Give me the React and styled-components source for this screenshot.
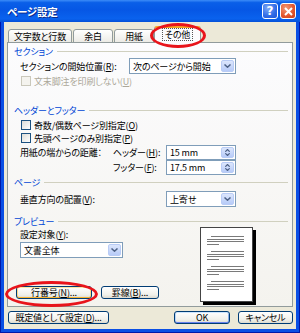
import React from 'react';
import styled, { createGlobalStyle, css } from 'styled-components';

const Global = createGlobalStyle`
  html, body { margin: 0; padding: 0; background: #ffffff; }
  body {
    font-family: "Noto Sans CJK JP", "Noto Sans", sans-serif;
    font-size: 9px;
    letter-spacing: -0.15px;
    font-feature-settings: "palt";
    color: #000;
  }
  * { box-sizing: border-box; }
`;

const Window = styled.div`
  position: relative;
  width: 300px;
  height: 333px;
  display: flex;
  flex-direction: column;
  background: #0A4FE4;
  padding: 0 4px 4px;
  box-shadow: inset 1px 0 #0019A8, inset -1px 0 #0019A8, inset 0 -1px #0019A8;
`;

const TitleBar = styled.div`
  height: 22px;
  margin: 0 -4px;
  display: flex;
  align-items: center;
  justify-content: space-between;
  padding: 0 4px 0 7px;
  background: linear-gradient(#3C8CF8 0%, #0A5FE8 12%, #0657E5 45%, #0A62EE 85%, #0450D8 100%);
`;

const Title = styled.span`
  color: #fff;
  font-weight: bold;
  font-size: 10.5px;
  letter-spacing: -0.2px;
  text-shadow: 1px 1px #0A2A8A;
`;

const Caps = styled.div`
  display: flex;
  gap: 2px;
`;

const CapButton = styled.div`
  width: 16px;
  height: 16px;
  border: 1px solid #fff;
  border-radius: 3px;
  display: flex;
  align-items: center;
  justify-content: center;
  color: #fff;
  font-family: "DejaVu Sans", sans-serif;
  font-weight: bold;
  font-size: 12px;
  letter-spacing: 0;
  background: ${p => p.red
    ? 'radial-gradient(circle at 35% 30%, #F29A78, #E2542B 60%, #C8401C)'
    : 'radial-gradient(circle at 35% 30%, #7FAAF8, #2F6BE6 60%, #1F55D6)'};
`;

const Client = styled.div`
  flex: 1;
  background: #ECE9D8;
  display: flex;
  flex-direction: column;
  padding: 4px 3px 0 3px;
`;

const TabStrip = styled.div`
  display: flex;
  align-items: flex-end;
  height: 17px;
  padding-left: 1px;
  margin-bottom: -1px;
  position: relative;
  z-index: 1;
`;

const Tab = styled.div`
  width: ${p => p.w}px;
  margin-right: ${p => p.gap || 0}px;
  height: ${p => (p.active ? 17 : 14)}px;
  border: 1px solid #919B9C;
  border-bottom: ${p => (p.active ? 'none' : '1px solid #919B9C')};
  border-radius: 3px 3px 0 0;
  display: flex;
  align-items: center;
  justify-content: center;
  white-space: nowrap;
  background: ${p => (p.active ? '#FCFCFE' : 'linear-gradient(#FFFFFF, #ECEBE6)')};
  ${p => p.active && css`
    border-top: 2px solid #F5A623;
    padding-bottom: 2px;
  `}
`;

const FocusText = styled.span`
  outline: 1px dotted #555;
  outline-offset: 0;
  padding: 0 2px;
  line-height: 11px;
`;

const Panel = styled.div`
  height: 265px;
  border: 1px solid #919B9C;
  background: linear-gradient(#FCFCFE, #F4F3EE);
  display: flex;
  flex-direction: column;
  padding: 0 4px 0 6px;
`;

const GroupHeader = styled.div`
  height: 12px;
  margin-top: ${p => p.mt}px;
  display: flex;
  align-items: center;
  gap: 4px;
  color: #0046D5;
  &::after {
    content: '';
    flex: 1;
    height: 1px;
    background: #D0D0BF;
  }
`;

const Row = styled.div`
  display: flex;
  align-items: center;
  height: ${p => p.h}px;
  margin-top: ${p => p.mt}px;
  margin-left: 6px;
`;

const Label = styled.span`
  width: ${p => (p.w ? `${p.w}px` : 'auto')};
  flex: none;
  white-space: nowrap;
  color: ${p => (p.disabled ? '#ACA899' : '#000')};
`;

const CheckRow = styled(Row)`
  gap: 3px;
`;

const Box = styled.span`
  width: 10px;
  height: 10px;
  flex: none;
  margin-left: 1px;
  border: 1px solid ${p => (p.disabled ? '#CAC8BB' : '#1C5180')};
  background: ${p => (p.disabled ? '#F4F3EE' : 'linear-gradient(135deg, #DCDCD7, #FFFFFF)')};
`;

const Field = styled.div`
  width: ${p => p.w}px;
  height: ${p => p.h}px;
  flex: none;
  border: 1px solid #7F9DB9;
  background: #fff;
  display: flex;
  align-items: center;
  padding: 1px;
`;

const FieldText = styled.span`
  flex: 1;
  padding-left: 2px;
  white-space: nowrap;
  overflow: hidden;
`;

const ArrowBtn = styled.span`
  width: 13px;
  align-self: stretch;
  border-radius: 2px;
  background: linear-gradient(#DCE6FC, #B7CBF8);
  border: 1px solid #B9CCF6;
  display: flex;
  flex-direction: column;
  align-items: center;
  justify-content: center;
  gap: 1px;
`;

const Chevron = () => (
  <svg width="7" height="4" viewBox="0 0 7 4">
    <path d="M0.5 0.5 L3.5 3.2 L6.5 0.5" fill="none" stroke="#4D6185" strokeWidth="1.5" />
  </svg>
);

const Combo = ({ w, h = 16, children }) => (
  <Field w={w} h={h}>
    <FieldText>{children}</FieldText>
    <ArrowBtn><Chevron /></ArrowBtn>
  </Field>
);

const SmallChevron = ({ up }) => (
  <svg width="5" height="3" viewBox="0 0 5 3">
    <path d={up ? 'M0.3 2.7 L2.5 0.5 L4.7 2.7' : 'M0.3 0.3 L2.5 2.5 L4.7 0.3'} fill="none" stroke="#4D6185" strokeWidth="1.2" />
  </svg>
);

const Spinner = ({ w, children }) => (
  <Field w={w} h={15}>
    <FieldText>{children}</FieldText>
    <ArrowBtn><SmallChevron up /><SmallChevron /></ArrowBtn>
  </Field>
);

const PreviewBody = styled.div`
  display: flex;
  margin-left: 6px;
`;

const PreviewLeft = styled.div`
  width: 180px;
  display: flex;
  flex-direction: column;
`;

const LeftLabel = styled.div`
  height: 12px;
  margin-top: 1px;
  display: flex;
  align-items: center;
`;

const ComboWrap = styled.div`
  margin-top: 2px;
`;

const ButtonRow = styled.div`
  display: flex;
  gap: 9px;
  margin-top: 28px;
  margin-left: -4px;
`;

const Button = styled.div`
  width: ${p => p.w}px;
  height: 13px;
  border: 1px solid #003C74;
  border-radius: 3px;
  display: flex;
  align-items: center;
  justify-content: center;
  white-space: nowrap;
  background: linear-gradient(#FFFFFF, #F0F0EA 70%, #DCDAD0);
  ${p => p.hot && css`
    box-shadow: inset 0 1px #FFE7A2, inset 0 -1px #F8B330, inset 1px 0 #FDD889, inset -1px 0 #FDD889;
  `}
  ${p => p.def && css`
    box-shadow: inset 0 1px #CEE7FF, inset 0 -1px #6982EE, inset 1px 0 #B8D6FB, inset -1px 0 #89ADE4;
  `}
`;

const Footer = styled.div`
  display: flex;
  justify-content: space-between;
  padding: 4px 0 0 1px;
`;

const RightButtons = styled.div`
  display: flex;
  gap: 8px;
`;

const Ring = styled.div`
  position: absolute;
  left: ${p => p.x}px;
  top: ${p => p.y}px;
  width: ${p => p.w}px;
  height: ${p => p.h}px;
  border: 3px solid #E8141B;
  border-radius: 50%;
  pointer-events: none;
  z-index: 5;
`;

const PageDrawing = () => {
  const paras = [237, 252, 267, 282];
  return (
    <svg width="56" height="78" viewBox="0 0 56 78">
      <rect x="3" y="3" width="53" height="75" fill="#000" />
      <rect x="0.5" y="0.5" width="52" height="74" fill="#fff" stroke="#444" />
      {paras.map(py => {
        const y = py - 228;
        return (
          <g key={py} fill="#7A7A7A">
            <rect x="11" y={y} width="33" height="1" />
            <rect x="7" y={y + 3} width="37" height="1" />
            <rect x="7" y={y + 5} width="37" height="1" />
            <rect x="7" y={y + 8} width="12" height="1" />
          </g>
        );
      })}
    </svg>
  );
};

export default function App() {
  return (
    <>
      <Global />
      <Window>
        <TitleBar>
          <Title>ページ設定</Title>
          <Caps>
            <CapButton>?</CapButton>
            <CapButton red>
              <svg width="9" height="9" viewBox="0 0 9 9">
                <path d="M1 1 L8 8 M8 1 L1 8" stroke="#fff" strokeWidth="2" />
              </svg>
            </CapButton>
          </Caps>
        </TitleBar>
        <Client>
          <TabStrip>
            <Tab w={64} gap={1}>文字数と行数</Tab>
            <Tab w={40} gap={1}>余白</Tab>
            <Tab w={40} gap={0}>用紙</Tab>
            <Tab w={47} active><FocusText>その他</FocusText></Tab>
          </TabStrip>
          <Panel>
            <GroupHeader mt={2}>セクション</GroupHeader>
            <Row h={16} mt={1}>
              <Label w={109}>セクションの開始位置(<u>R</u>):</Label>
              <Combo w={107}>次のページから開始</Combo>
            </Row>
            <CheckRow h={12} mt={1}>
              <Box disabled />
              <Label disabled>文末脚注を印刷しない(<u>U</u>)</Label>
            </CheckRow>
            <GroupHeader mt={17}>ヘッダーとフッター</GroupHeader>
            <CheckRow h={12} mt={3}>
              <Box />
              <Label>奇数/偶数ページ別指定(<u>O</u>)</Label>
            </CheckRow>
            <CheckRow h={12} mt={1}>
              <Box />
              <Label>先頭ページのみ別指定(<u>P</u>)</Label>
            </CheckRow>
            <Row h={15} mt={1}>
              <Label w={93}>用紙の端からの距離：</Label>
              <Label w={53}>ヘッダー(<u>H</u>):</Label>
              <Spinner w={70}>15 mm</Spinner>
            </Row>
            <Row h={15} mt={0}>
              <Label w={93} />
              <Label w={53}>フッター(<u>F</u>):</Label>
              <Spinner w={70}>17.5 mm</Spinner>
            </Row>
            <GroupHeader mt={1}>ページ</GroupHeader>
            <Row h={16} mt={3}>
              <Label w={146}>垂直方向の配置(<u>V</u>):</Label>
              <Combo w={70}>上寄せ</Combo>
            </Row>
            <GroupHeader mt={8}>プレビュー</GroupHeader>
            <PreviewBody>
              <PreviewLeft>
                <LeftLabel>設定対象(<u>Y</u>):</LeftLabel>
                <ComboWrap>
                  <Combo w={103}>文書全体</Combo>
                </ComboWrap>
                <ButtonRow>
                  <Button w={76} hot>行番号(<u>N</u>)...</Button>
                  <Button w={58}>罫線(<u>B</u>)...</Button>
                </ButtonRow>
              </PreviewLeft>
              <PageDrawing />
            </PreviewBody>
          </Panel>
          <Footer>
            <Button w={101}>既定値として設定(<u>D</u>)...</Button>
            <RightButtons>
              <Button w={56} def>OK</Button>
              <Button w={55}>キャンセル</Button>
            </RightButtons>
          </Footer>
        </Client>
        <Ring x={150} y={23} w={56} h={25} />
        <Ring x={5} y={281} w={93} h={26} />
      </Window>
    </>
  );
}
